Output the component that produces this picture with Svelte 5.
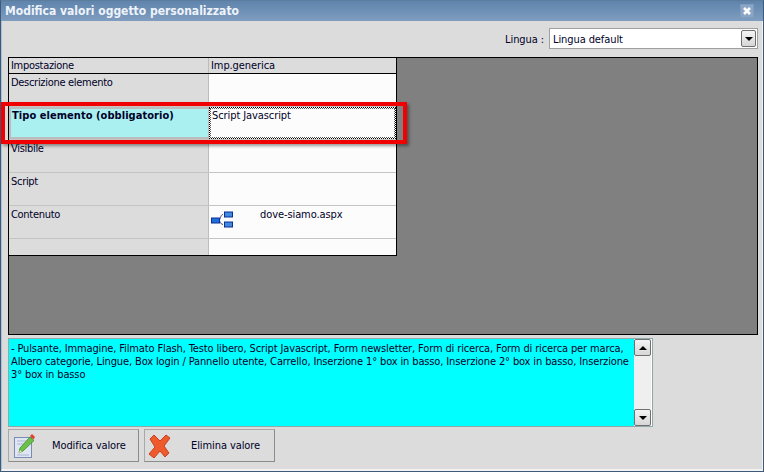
<script>
  const rows = [
    { label: 'Descrizione elemento', value: '' },
    { label: 'Tipo elemento (obbligatorio)', value: 'Script Javascript', active: true },
    { label: 'Visibile', value: '' },
    { label: 'Script', value: '' },
    { label: 'Contenuto', value: 'dove-siamo.aspx', tree: true },
    { label: '', value: '', short: true }
  ];
</script>

<div class="window">
  <header class="title">
    <span>Modifica valori oggetto personalizzato</span>
    <svg class="close" width="14" height="14" viewBox="0 0 14 14">
      <rect x="0.5" y="0.5" width="13" height="13" fill="#8ba6c4" stroke="#7f9cbc" />
      <path d="M4 4l6 6M10 4l-6 6" stroke="#fff" stroke-width="2.6" />
    </svg>
  </header>

  <div class="body">
    <div class="lang">
      <label for="lingua">Lingua :</label>
      <div class="select" id="lingua">
        <span>Lingua default</span>
        <div class="arrowbtn"><i class="down"></i></div>
      </div>
    </div>

    <div class="panel">
      <div class="grid">
        <div class="row head">
          <div class="c1">Impostazione</div>
          <div class="c2">Imp.generica</div>
        </div>
        {#each rows as r}
          <div class="row" class:short={r.short} class:active={r.active}>
            <div class="c1">{r.label}</div>
            <div class="c2">
              {#if r.tree}
                <svg class="tree" width="24" height="19" viewBox="0 0 24 19">
                  <path d="M8 11.5C11 11.5 10 5.500 13 5.500M8 11.500C11 11.500 10 15.500 13 15.500" stroke="#3a4f80" fill="none" />
                  <rect x="1.500" y="9" width="8" height="5" fill="#1f6fd8" stroke="#0c2f96" />
                  <rect x="14.500" y="3" width="8" height="5" fill="#3f8ade" stroke="#0c2f96" />
                  <rect x="14.500" y="13" width="8" height="5" fill="#3f8ade" stroke="#0c2f96" />
                </svg>
                <span class="file">{r.value}</span>
              {:else}
                {r.value}
              {/if}
            </div>
          </div>
        {/each}
      </div>
      <div class="mark"></div>
    </div>

    <div class="note">
      <p>- Pulsante, Immagine, Filmato Flash, Testo libero, Script Javascript, Form newsletter, Form di ricerca, Form di ricerca per marca, Albero categorie, Lingue, Box login / Pannello utente, Carrello, Inserzione 1° box in basso, Inserzione 2° box in basso, Inserzione 3° box in basso</p>
      <div class="scroll">
        <div class="arrowbtn sb"><i class="up"></i></div>
        <div class="arrowbtn sb"><i class="down"></i></div>
      </div>
    </div>

    <div class="actions">
      <button type="button">
        <svg width="24" height="26" viewBox="0 0 24 26">
          <rect x="2.500" y="4.500" width="17" height="20" fill="#dfe5f2" stroke="#7a8cb4" />
          <path d="M5 8h9M5 11h7M5 22h12" stroke="#aab6d2" />
          <path d="M7 20l1-5L18 4l4 3.500L11 18z" fill="#6cc04a" stroke="#3f8a2c" stroke-width=".8" />
          <path d="M7 20l1-3 2 2z" fill="#f2e2b8" />
          <path d="M18 3l2-2 3 3-1.500 2.500z" fill="#e0402c" />
        </svg>
        <span>Modifica valore</span>
      </button>
      <button type="button" class="del">
        <svg width="24" height="24" viewBox="0 0 24 24">
          <path d="M2 5l4-4 6 6 6-6 4 3-6 8 5 7-4 4-5-6-6 7-5-4 6-7z" fill="#ee5a2c" stroke="#c8401c" stroke-linejoin="round" />
        </svg>
        <span>Elimina valore</span>
      </button>
    </div>
  </div>
</div>

<style>
  :global(body) {
    margin: 0;
    background: #dcdcdc;
  }
  .window {
    width: 764px;
    height: 472px;
    box-sizing: border-box;
    display: flex;
    flex-direction: column;
    background: #dcdcdc;
    border: 1px solid #3d5a78;
    border-top-color: #5d7d9f;
    font-family: "DejaVu Sans", sans-serif;
    font-stretch: condensed;
    font-size: 11px;
    letter-spacing: -0.09px;
    color: #000028;
  }
  .title {
    height: 20px;
    flex: none;
    display: flex;
    align-items: center;
    justify-content: space-between;
    padding: 0 9px 0 4px;
    background: linear-gradient(#5f84ac, #7f9dc0);
    color: #eef3fa;
    font-size: 12px;
    font-weight: 700;
    letter-spacing: 0;
  }
  .body {
    flex: 1;
    min-height: 0;
    display: flex;
    flex-direction: column;
    padding: 7px 4px 6px 6px;
    border-left: 1px solid #a9bdd4;
    border-right: 1px solid #f2f2f2;
    border-bottom: 2px solid #f2f2f2;
    box-sizing: border-box;
  }
  .lang {
    height: 21px;
    display: flex;
    justify-content: flex-end;
    align-items: center;
    gap: 5px;
    margin-bottom: 8px;
  }
  .lang label, .select span { padding-top: 1px; }
  .select {
    width: 209px;
    height: 21px;
    box-sizing: border-box;
    border: 1px solid #a0a0a0;
    background: #fff;
    display: flex;
    align-items: center;
    justify-content: space-between;
    padding: 0 1px 0 3px;
  }
  .arrowbtn {
    width: 15px;
    height: 17px;
    box-sizing: border-box;
    border: 1px solid #707070;
    border-radius: 2px;
    background: linear-gradient(#f4f4f4, #d6d6d6);
    display: flex;
    align-items: center;
    justify-content: center;
  }
  i {
    width: 0;
    height: 0;
    border-left: 4px solid transparent;
    border-right: 4px solid transparent;
  }
  .down { border-top: 4px solid #000; }
  .up { border-bottom: 4px solid #000; }
  .panel {
    position: relative;
    height: 278px;
    box-sizing: border-box;
    width: 750px;
    background: #808080;
    border: 1px solid #000;
    flex: none;
  }
  .grid {
    width: 387px;
    border-right: 1px solid #000;
    border-bottom: 1px solid #000;
  }
  .row {
    display: grid;
    grid-template-columns: 200px 1fr;
    height: 33px;
    box-sizing: border-box;
    border-bottom: 1px solid #c4c4c4;
  }
  .row:last-child { border-bottom: 0; }
  .row.short { height: 16px; }
  .row.head {
    height: 16px;
    border-bottom: 1px solid #000;
  }
  .c1 {
    background: #dcdcdc;
    border-right: 1px solid #bcbcbc;
    padding: 2px 0 0 2px;
    white-space: nowrap;
    line-height: 14px;
    letter-spacing: -0.3px;
  }
  .c2 {
    background: #fcfcfc;
    padding: 2px 0 0 2px;
    white-space: nowrap;
    line-height: 14px;
    display: flex;
    align-items: flex-start;
  }
  .head .c1, .head .c2 {
    background: #dcdcdc;
    padding-top: 1px;
  }
  .active .c1 {
    background: #aaf0f0;
    border: 2px solid #bcbcbc;
    border-width: 2px 1px 2px 2px;
    font-weight: 700;
    padding: 0 0 0 1px;
    letter-spacing: 0.05px;
  }
  .active .c2 {
    border: 1px dotted #000;
    outline: 1px dotted #555;
    outline-offset: -2px;
    padding: 1px 0 0 2px;
  }
  .tree { margin: 1px 0 0 -1px; flex: none; }
  .file { margin-left: 26px; }
  .mark {
    position: absolute;
    left: -8px;
    top: 44px;
    width: 398px;
    height: 34px;
    border: 4px solid #f00000;
    box-shadow: 2px 2px 3px rgba(0, 0, 0, 0.4);
    pointer-events: none;
  }
  .note {
    width: 645px;
    height: 89px;
    box-sizing: border-box;
    margin-top: 3px;
    flex: none;
    background: #00ffff;
    border: 1px solid #8fa8a8;
    display: flex;
    justify-content: space-between;
  }
  .note p {
    margin: 0;
    padding: 3px 0 0 2px;
    line-height: 13px;
    width: 625px;
    box-sizing: border-box;
    letter-spacing: -0.13px;
  }
  .scroll {
    width: 17px;
    background: #efefef;
    border-right: 1px solid #fff;
    display: flex;
    flex-direction: column;
    justify-content: space-between;
    flex: none;
  }
  .sb { width: 17px; height: 17px; }
  .actions {
    display: flex;
    gap: 5px;
    margin-top: 2px;
  }
  button {
    width: 131px;
    height: 33px;
    padding: 0 0 0 3px;
    background: #dcdcdc;
    border: 1px solid #a8a8a8;
    border-right-color: #8c8c8c;
    border-bottom-color: #8c8c8c;
    font: inherit;
    letter-spacing: inherit;
    color: inherit;
    display: flex;
    align-items: center;
  }
  button span { margin-left: 16px; }
  button.del span { margin-left: 19px; }
</style>
